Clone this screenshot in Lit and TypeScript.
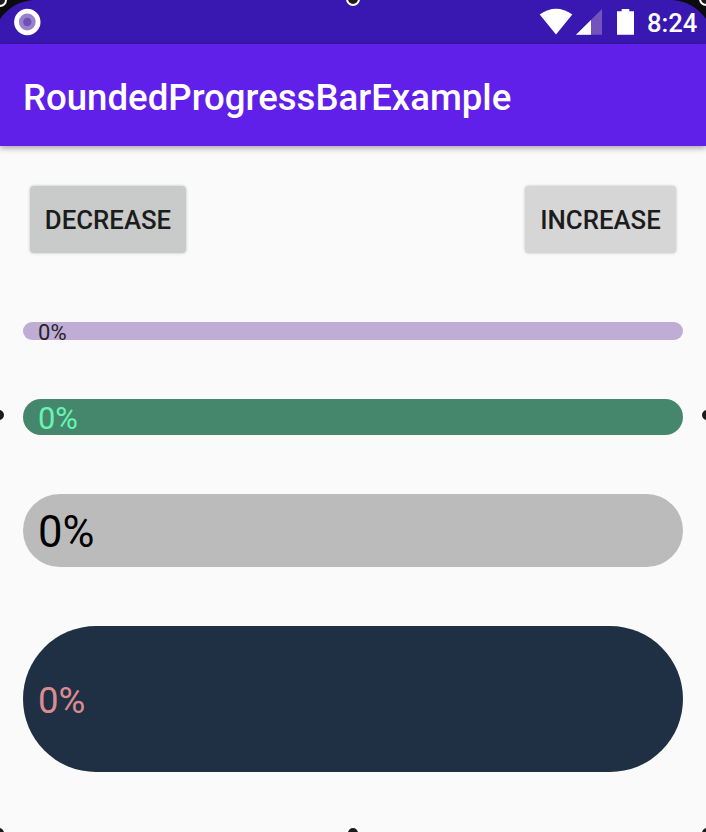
import { LitElement, html, css, svg } from "lit";
import { customElement, property } from "lit/decorators.js";

@customElement("rounded-progress-bar")
class RoundedProgressBar extends LitElement {
  @property({ type: Number }) value = 0;

  static styles = css`
    :host {
      display: flex;
      align-items: center;
      box-sizing: border-box;
      padding-left: 15px;
      border-radius: 73px;
      line-height: 1;
      white-space: nowrap;
    }
    .label {
      display: block;
    }
  `;

  render() {
    return html`<span class="label">${this.value}%</span>`;
  }
}

@customElement("status-bar")
class StatusBar extends LitElement {
  static styles = css`
    :host {
      display: flex;
      height: 44px;
      background: #3917b1;
      color: #fff;
    }
    .icons {
      flex: 1;
      height: 44px;
    }
    .time {
      width: 59px;
      font: 500 25.6px/46px Roboto, sans-serif;
    }
  `;

  render() {
    return html`
      <svg class="icons" width="647" height="44" viewBox="0 0 647 44">
        <circle cx="27.3" cy="22" r="13.2" fill="#fff" />
        <circle cx="27.3" cy="22" r="8.4" fill="#9b80cb" />
        <circle cx="27.3" cy="22" r="4.2" fill="#6f50b8" />
        <path d="M539.7 14.5Q556 3 572.3 14.5L556 34.5Z" fill="#fff" />
        <path d="M602 9V34.7H576Z" fill="#7453bd" />
        <path d="M591 20V34.7H576Z" fill="#fff" />
        <path d="M617 11.3h4.7V9h7.6v2.3h4.7v23.5h-17z" fill="#fff" />
      </svg>
      <span class="time">8:24</span>
    `;
  }
}

@customElement("app-root")
class AppRoot extends LitElement {
  static styles = css`
    :host {
      display: flex;
      flex-direction: column;
      position: relative;
      width: 706px;
      height: 832px;
      overflow: hidden;
      background: #fafafa;
      font-family: Roboto, sans-serif;
    }
    .toolbar {
      box-sizing: border-box;
      height: 102px;
      padding: 4px 23px 0;
      background: #611fea;
      color: #fff;
      font-size: 36.6px;
      font-weight: 500;
      line-height: 100px;
      box-shadow: 0 2px 6px rgba(0, 0, 0, 0.36);
    }
    .actions {
      display: flex;
      justify-content: space-between;
      padding: 40px 30px 0;
    }
    .button {
      box-sizing: border-box;
      width: 156px;
      height: 67px;
      padding: 1px 0 0;
      border: 0;
      border-radius: 4px;
      background: #c9cbca;
      color: #1c1c1c;
      font: 500 25.8px/67px Roboto, sans-serif;
      box-shadow: 0 0 3px rgba(0, 0, 0, 0.26);
    }
    .increase {
      width: 151px;
      background: #d6d6d6;
    }
    .bars {
      display: flex;
      flex-direction: column;
      gap: 59px;
      padding: 69px 23px 0;
    }
    .thin {
      height: 18px;
      padding-top: 3px;
      background: #bfadd5;
      color: #272329;
      font-size: 22px;
    }
    .green {
      height: 36px;
      padding-top: 4px;
      background: #45876d;
      color: #69f5b1;
      font-size: 30.8px;
    }
    .gray {
      height: 73px;
      padding-top: 5px;
      background: #bbb;
      color: #000;
      font-size: 43.6px;
    }
    .navy {
      height: 146px;
      padding-top: 4px;
      background: #1f3044;
      color: #dc8b91;
      font-size: 36.6px;
    }
    .frame {
      position: absolute;
      inset: 0;
      pointer-events: none;
    }
  `;

  private handle(x: number, y: number) {
    return svg`<circle cx=${x} cy=${y} r="6" fill="#1c1c1c" stroke="#fff" stroke-width="2" />`;
  }

  render() {
    return html`
      <status-bar></status-bar>
      <div class="toolbar">RoundedProgressBarExample</div>
      <div class="actions">
        <button class="button">DECREASE</button>
        <button class="button increase">INCREASE</button>
      </div>
      <div class="bars">
        <rounded-progress-bar class="thin"></rounded-progress-bar>
        <rounded-progress-bar class="green"></rounded-progress-bar>
        <rounded-progress-bar class="gray"></rounded-progress-bar>
        <rounded-progress-bar class="navy"></rounded-progress-bar>
      </div>
      <svg class="frame" width="706" height="832" viewBox="0 0 706 832">
        <path d="M0 0H33Q12 2 0 19Z" fill="#0c0c0c" />
        <path d="M706 0H673Q694 2 706 19Z" fill="#0c0c0c" />
        ${this.handle(0, 0)} ${this.handle(353, -1)} ${this.handle(706, -1)}
        ${this.handle(-1, 415)} ${this.handle(707, 415)}
        ${this.handle(-1, 833)} ${this.handle(353, 833)} ${this.handle(707, 833)}
      </svg>
    `;
  }
}
